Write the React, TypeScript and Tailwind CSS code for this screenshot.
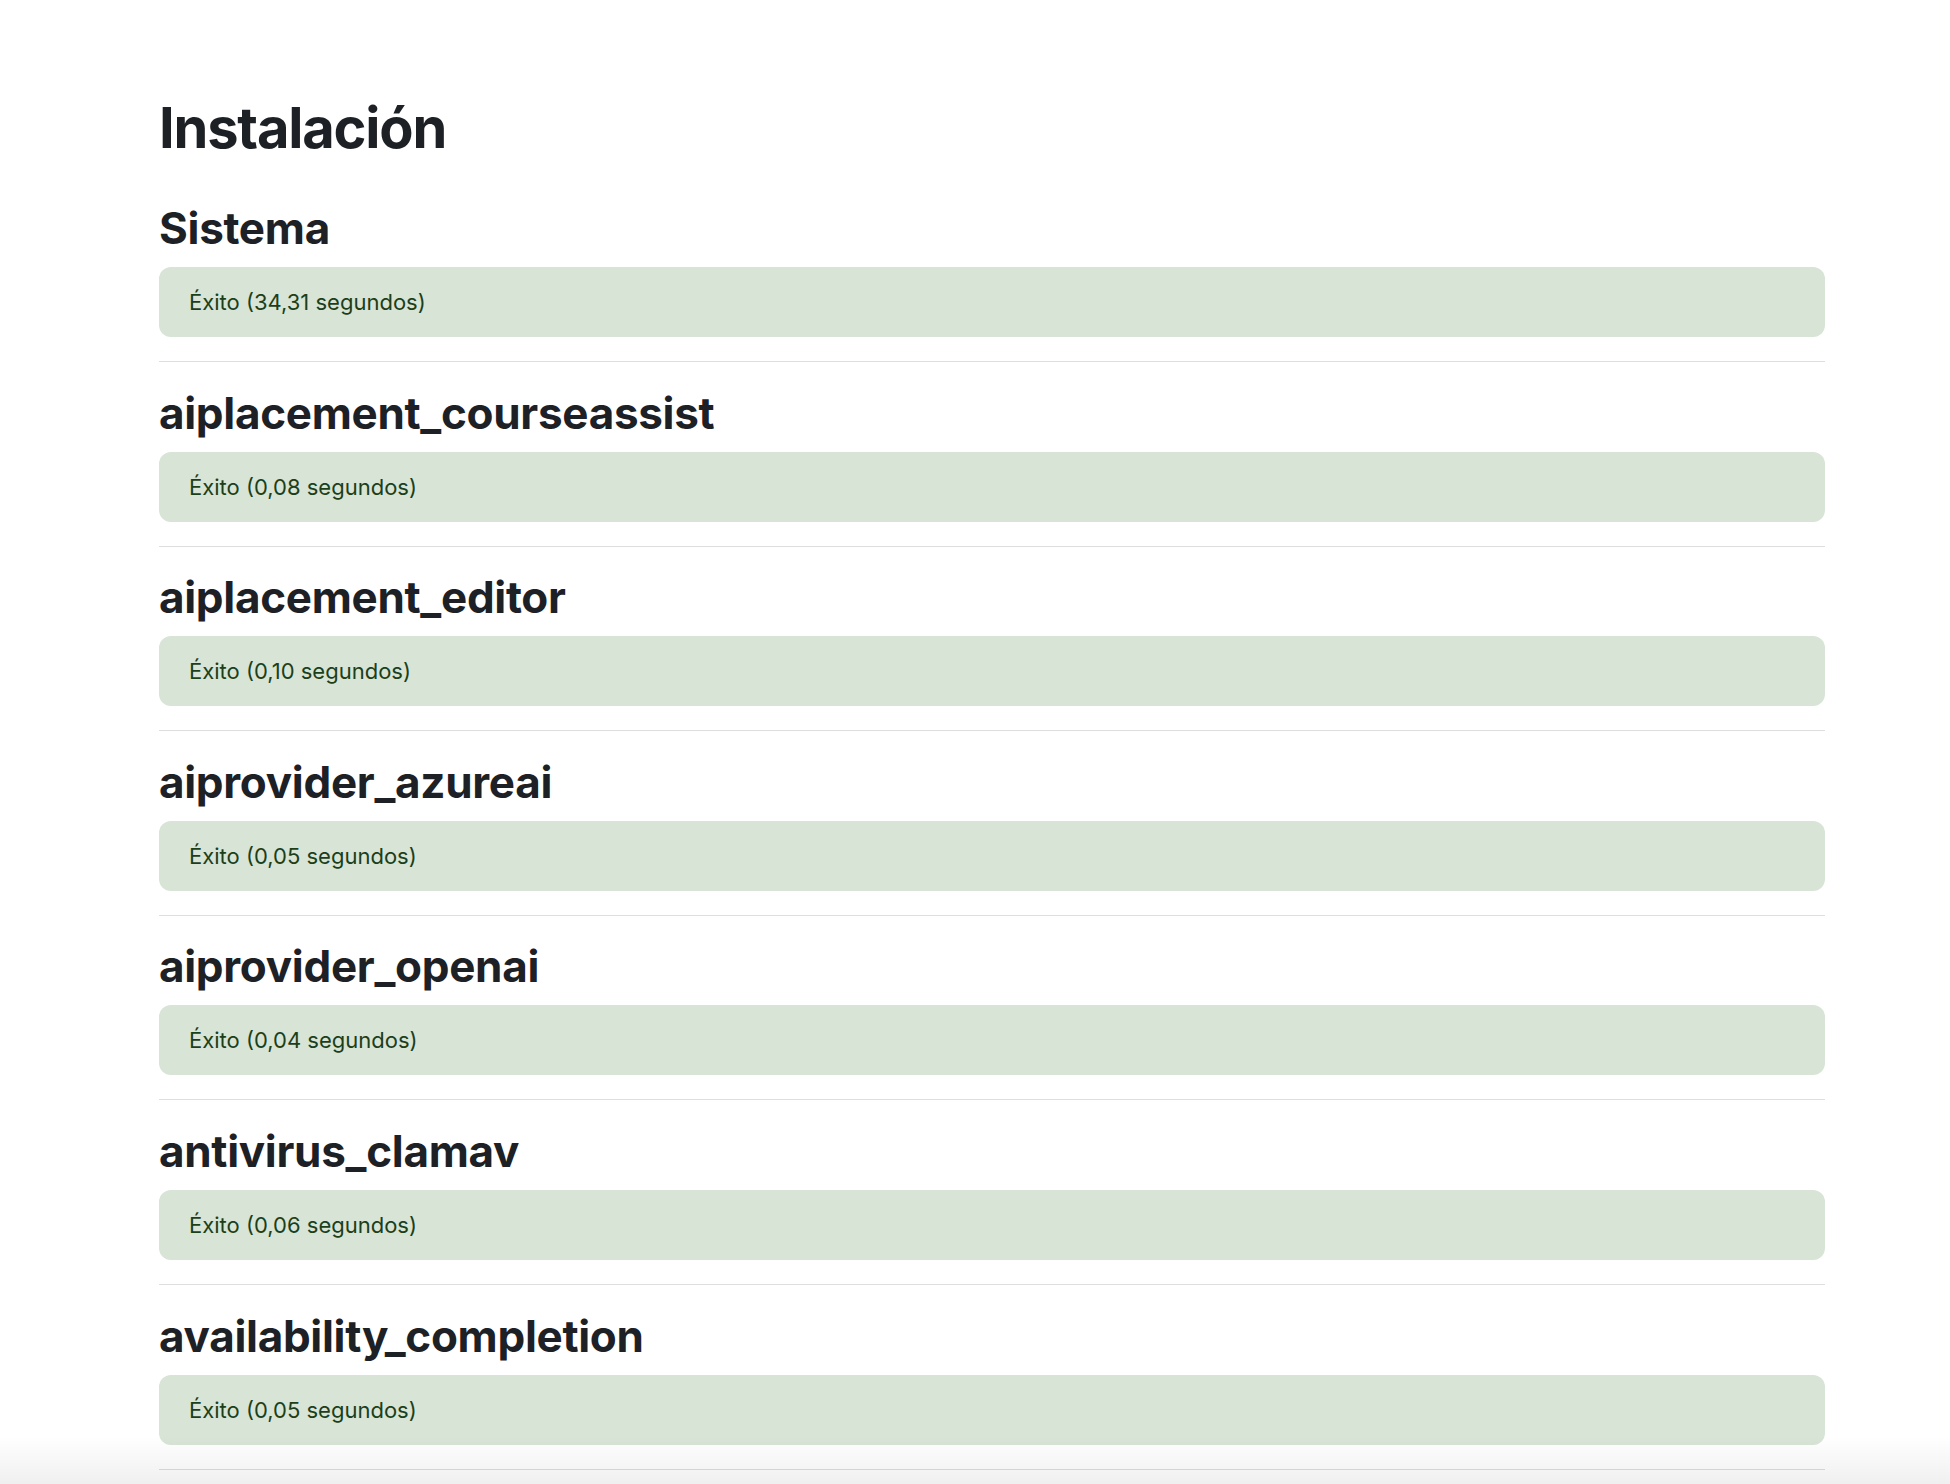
import React from "react";

const sections: { name: string; time: string }[] = [
  { name: "Sistema", time: "34,31" },
  { name: "aiplacement_courseassist", time: "0,08" },
  { name: "aiplacement_editor", time: "0,10" },
  { name: "aiprovider_azureai", time: "0,05" },
  { name: "aiprovider_openai", time: "0,04" },
  { name: "antivirus_clamav", time: "0,06" },
  { name: "availability_completion", time: "0,05" },
];

export default function App() {
  return (
    <div
      className="min-h-screen bg-white text-[#1d2125]"
      style={{ fontFamily: "Inter, 'Noto Sans', sans-serif" }}
    >
      <div className="pl-[159px] pr-[125px] pt-[95px]">
        <h2 className="text-[56px] leading-[67px] font-bold tracking-[-1.2px]">Instalación</h2>
        <div className="mt-[40px]">
          {sections.map((s, i) => (
            <div key={s.name}>
              {i > 0 && <div className="h-[24.6px]" />}
              <h3 className="text-[44px] leading-[53px] font-bold tracking-[-0.3px]">{s.name}</h3>
              <div className="mt-[12px] h-[70px] rounded-[12px] bg-[#d7e4d6] px-[30px] pt-[19px] text-[22px] leading-[32px] text-[#1c3f1a]">
                Éxito ({s.time} segundos)
              </div>
              <div className="mt-[24px] h-px bg-[#dedede]" />
            </div>
          ))}
        </div>
      </div>
      <div className="pointer-events-none fixed bottom-0 left-0 right-0 h-[48px] bg-gradient-to-b from-transparent to-black/[0.06]" />
    </div>
  );
}
